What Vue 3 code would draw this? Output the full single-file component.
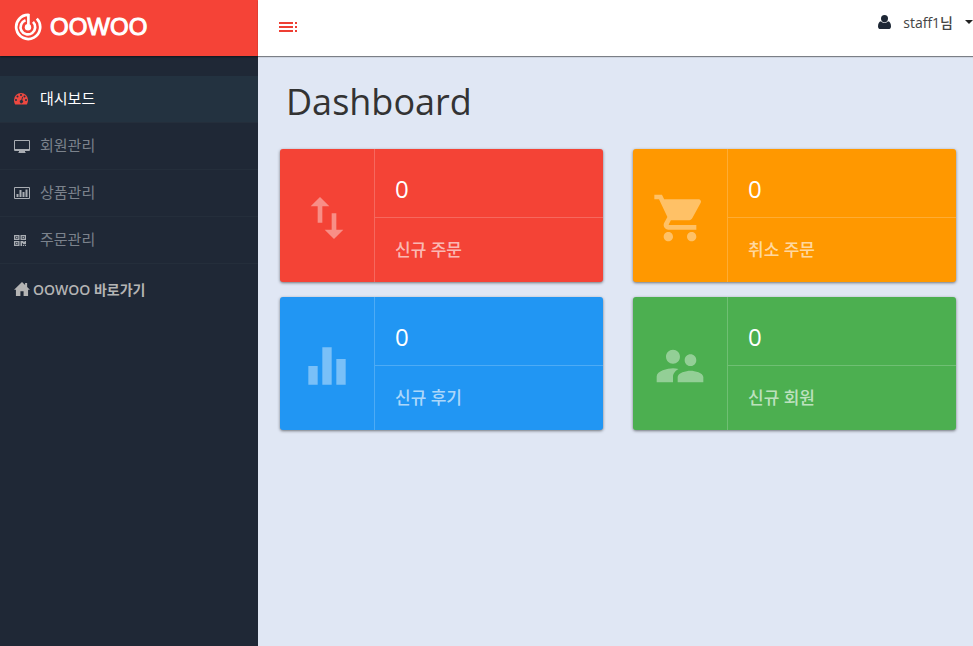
<script setup>
const menu = [
  { label: '대시보드', icon: 'gauge', active: true },
  { label: '회원관리', icon: 'desktop' },
  { label: '상품관리', icon: 'chart' },
  { label: '주문관리', icon: 'qr' },
]

const cards = [
  {
    label: '신규 주문', value: 0, tone: 'red',
    path: 'M16 17.01V10h-2v7.01h-3L15 21l4-3.99h-3zM9 3L5 6.99h3V14h2V6.99h3L9 3z',
  },
  {
    label: '취소 주문', value: 0, tone: 'orange',
    path: 'M7 18c-1.1 0-1.99.9-1.99 2S5.9 22 7 22s2-.9 2-2-.9-2-2-2zM1 2v2h2l3.6 7.59-1.35 2.45c-.16.28-.25.61-.25.96 0 1.1.9 2 2 2h12v-2H7.42c-.14 0-.25-.11-.25-.25l.03-.12.9-1.63h7.45c.75 0 1.41-.41 1.75-1.03l3.58-6.49A1 1 0 0 0 20 4H5.21l-.94-2H1zm16 16c-1.1 0-1.99.9-1.99 2s.89 2 1.99 2 2-.9 2-2-.9-2-2-2z',
  },
  {
    label: '신규 후기', value: 0, tone: 'blue',
    path: 'M10 20h4V4h-4v16zm-6 0h4v-8H4v8zM16 9v11h4V9h-4z',
  },
  {
    label: '신규 회원', value: 0, tone: 'green',
    path: 'M16.5 12c1.38 0 2.49-1.12 2.49-2.5S17.88 7 16.5 7C15.12 7 14 8.12 14 9.5s1.12 2.5 2.5 2.5zM9 11c1.66 0 2.99-1.34 2.99-3S10.66 5 9 5C7.34 5 6 6.34 6 8s1.34 3 3 3zm7.5 3c-1.83 0-5.5.92-5.5 2.75V19h11v-2.25c0-1.83-3.67-2.75-5.5-2.75zM9 13c-2.33 0-7 1.17-7 3.5V19h7v-2.25c0-.85.33-2.34 2.37-3.47C10.5 13.1 9.66 13 9 13z',
  },
]
</script>

<template>
  <div class="layout">
    <aside class="sidebar">
      <a class="brand" href="#">
        <svg class="brand-mark" viewBox="0 0 28 28" aria-hidden="true">
          <g fill="none" stroke="#fff" stroke-width="2.7">
            <path d="M15.2 2A12 12 0 1 0 22.8 5.6" />
            <path d="M11.500 7.200A7.300 7.300 0 1 0 19 8.900" />
            <path d="M14.400 1V14" />
          </g>
          <circle cx="14" cy="14.2" r="3.2" fill="#fff" />
        </svg>
        <span class="brand-name">OOWOO</span>
      </a>
      <nav class="menu">
        <a
          v-for="item in menu"
          :key="item.label"
          href="#"
          class="menu-item"
          :class="{ active: item.active }"
        >
          <span class="menu-icon">
            <svg v-if="item.icon === 'gauge'" width="14" height="12" viewBox="0 0 14 12" fill="currentColor">
              <path fill-rule="evenodd" d="M7 0a7 7 0 0 0-7 7c0 1.7.4 3 1 4.2.2.3.4.4.7.4h10.600c.3 0 .5-.1.700-.4C13.600 10 14 8.700 14 7a7 7 0 0 0-7-7zM2 6a1 1 0 1 1 0 2 1 1 0 0 1 0-2zM3.500 2.500a1 1 0 1 1 0 2 1 1 0 0 1 0-2zM7 1a1 1 0 1 1 0 2 1 1 0 0 1 0-2zM12 6a1 1 0 1 1 0 2 1 1 0 0 1 0-2zM10.500 2.500a1 1 0 1 1 0 2 1 1 0 0 1 0-2zM8.200 3.800l.8.2-.8 3.200a1.600 1.600 0 1 1-.9-.2z" />
            </svg>
            <svg v-else-if="item.icon === 'desktop'" width="16" height="13" viewBox="0 0 16 13" fill="currentColor">
              <path fill-rule="evenodd" d="M1 0h14a1 1 0 0 1 1 1v9a1 1 0 0 1-1 1h-4v1h0.500v1h-7v-1H5v-1H1a1 1 0 0 1-1-1V1a1 1 0 0 1 1-1zM1 1v8h14V1z" />
            </svg>
            <svg v-else-if="item.icon === 'chart'" width="16" height="12" viewBox="0 0 16 12" fill="currentColor">
              <path fill-rule="evenodd" d="M1 0h14a1 1 0 0 1 1 1v10a1 1 0 0 1-1 1H1a1 1 0 0 1-1-1V1a1 1 0 0 1 1-1zM1 1v10h14V1z" />
              <path d="M2.500 7h2v3h-2zM5.500 3h2v7h-2zM8.500 5h2v5h-2zM11.500 2.500h2v7.500h-2z" />
            </svg>
            <svg v-else width="12" height="11" viewBox="0 0 12 12" preserveAspectRatio="none" fill="currentColor">
              <path fill-rule="evenodd" d="M0 0h5.500v5.500H0zM1.300 1.300v2.900h2.900V1.300zM6.500 0H12v5.500H6.500zM7.800 1.300v2.900h2.900V1.300zM0 6.500h5.500V12H0zM1.300 7.800v2.900h2.900V7.800z" />
              <path d="M2 2h1.500v1.500H2zM8.500 2H10v1.500H8.500zM2 8.500h1.500V10H2zM6.500 6.500h3v1h1v-1H12v3.500H9V9H8v3H6.500zM8.800 10.800H10V12H8.800zM10.800 10.800H12V12h-1.200z" />
            </svg>
          </span>
          <span class="menu-label">{{ item.label }}</span>
        </a>
      </nav>
      <a class="shortcut" href="#">
        <svg width="16" height="14" viewBox="0 0 17 15" fill="currentColor" aria-hidden="true">
          <path d="M8.500 0L11.800 3.200V1.200H14v4.200L17 8.300H15V15H10.200V10H6.800v5H2V8.300H0z" />
        </svg>
        <span>OOWOO 바로가기</span>
      </a>
    </aside>

    <div class="content">
      <header class="topbar">
        <button class="toggle" type="button" aria-label="메뉴">
          <svg width="24" height="24" viewBox="0 0 24 24" fill="currentColor">
            <path d="M3 9h14V7H3v2zm0 4h14v-2H3v2zm0 4h14v-2H3v2zm16 0h2v-2h-2v2zm0-10v2h2V7h-2zm0 6h2v-2h-2v2z" />
          </svg>
        </button>
        <button class="user" type="button">
          <svg width="13" height="14" viewBox="0 0 13 14" fill="currentColor" aria-hidden="true">
            <ellipse cx="6.500" cy="3.600" rx="3.500" ry="3.600" />
            <path d="M3 6.300C1 6.700 0 8.800 0 11.400 0 13 1 14 2.500 14h8c1.500 0 2.500-1 2.500-2.600 0-2.600-1-4.700-3-5.100-1 1-2 1.500-3.500 1.500S4 7.300 3 6.300z" />
          </svg>
          <span class="user-name">staff1님</span>
          <span class="caret"></span>
        </button>
      </header>

      <main class="main">
        <h1>Dashboard</h1>
        <div class="cards">
          <section v-for="card in cards" :key="card.label" class="card" :class="card.tone">
            <div class="card-icon">
              <svg width="56" height="56" viewBox="0 0 24 24" fill="currentColor" aria-hidden="true">
                <path :d="card.path" />
              </svg>
            </div>
            <div class="card-body">
              <div class="card-value">{{ card.value }}</div>
              <div class="card-label">{{ card.label }}</div>
            </div>
          </section>
        </div>
      </main>
    </div>
  </div>
</template>

<style>
body {
  margin: 0;
  background: #e0e7f4;
}
</style>

<style scoped>
.layout {
  display: flex;
  min-height: 100vh;
  font-family: 'Open Sans', 'Noto Sans CJK KR', sans-serif;
  font-size: 15px;
}
a {
  text-decoration: none;
}
button {
  padding: 0;
  border: 0;
  background: none;
  font: inherit;
  cursor: pointer;
}
.sidebar {
  flex: none;
  width: 258px;
  background: #1f2836;
}
.brand {
  display: flex;
  align-items: center;
  gap: 8px;
  height: 56px;
  padding: 0 14px 2px;
  box-sizing: border-box;
  background: #f54337;
  box-shadow: 0 1px 2px rgba(0, 0, 0, 0.5);
  color: #fff;
}
.brand-mark {
  width: 28px;
  height: 28px;
}
.brand-name {
  font-family: 'Liberation Sans', Arial, sans-serif;
  font-size: 24px;
  line-height: 28px;
  -webkit-text-stroke: 1px #fff;
}
.menu {
  padding-top: 20px;
}
.menu-item {
  display: flex;
  align-items: center;
  height: 46px;
  padding-left: 14px;
  border-bottom: 1px solid #242e3b;
  color: #7b828c;
}
.menu-icon {
  display: flex;
  width: 26px;
  color: #a9adb3;
}
.menu-label {
  padding-bottom: 4px;
}
.menu-item.active {
  background: #233240;
  color: #fff;
}
.menu-item.active .menu-icon {
  color: #ee4840;
}
.shortcut {
  display: flex;
  align-items: center;
  gap: 3px;
  height: 50px;
  padding-left: 14px;
  color: #b4b4b4;
  font-size: 14px;
  font-weight: 600;
}
.content {
  flex: 1;
  min-width: 0;
  background: #e0e7f4;
}
.topbar {
  display: flex;
  align-items: center;
  justify-content: space-between;
  height: 54px;
  padding: 0 0 2px 18px;
  background: #fff;
  box-shadow: 0 1px 1px rgba(0, 0, 0, 0.45);
}
.toggle {
  display: flex;
  color: #ee3f34;
}
.user {
  display: flex;
  align-items: center;
  padding-bottom: 10px;
  color: #1d2735;
}
.user-name {
  margin: 0 12px;
  color: #444;
  font-size: 14px;
  font-weight: 500;
}
.caret {
  border: 4px solid transparent;
  border-top-color: #222;
  border-bottom: 0;
}
.main {
  padding: 19px 17px 20px 22px;
}
h1 {
  margin: 0;
  padding: 0 6px;
  color: #333;
  font-size: 36px;
  font-weight: 400;
  line-height: 54px;
}
.cards {
  display: grid;
  grid-template-columns: 1fr 1fr;
  gap: 15px 30px;
  padding-top: 20px;
}
.card {
  display: flex;
  border-radius: 3px;
  box-shadow: 0 1px 3px rgba(0, 0, 0, 0.5);
  color: #fff;
}
.red { background: #f44336; }
.orange { background: #ff9800; }
.blue { background: #2196f3; }
.green { background: #4caf50; }
.card-icon {
  display: flex;
  align-items: center;
  justify-content: center;
  width: 94px;
  padding-top: 5px;
  border-right: 1px solid rgba(255, 255, 255, 0.2);
  color: rgba(255, 255, 255, 0.4);
}
.card-body {
  flex: 1;
}
.card-value {
  padding: 24px 20px 12px;
  border-bottom: 1px solid rgba(255, 255, 255, 0.2);
  font-size: 24px;
  line-height: 32px;
}
.card-label {
  padding: 20px;
  color: rgba(255, 255, 255, 0.65);
  font-size: 17px;
  font-weight: 500;
  line-height: 24px;
}
</style>
